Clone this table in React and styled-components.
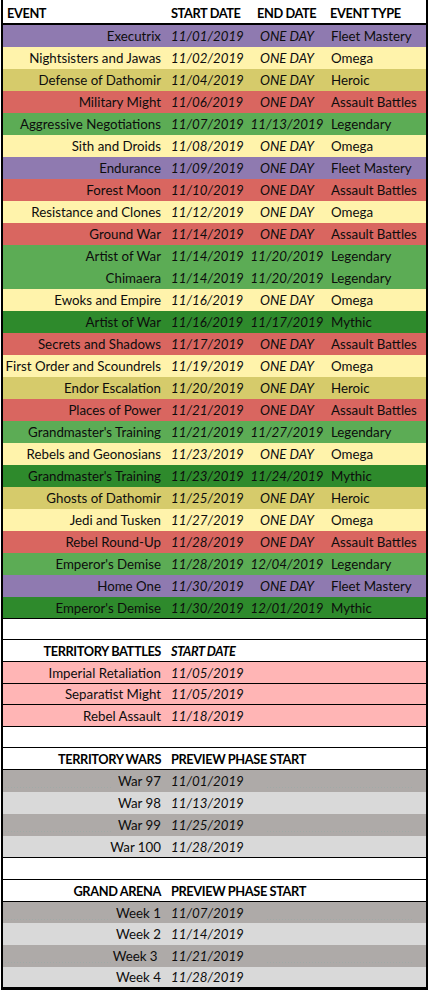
import React from "react";
import styled, { createGlobalStyle, css } from "styled-components";

const GlobalStyle = createGlobalStyle`
  html, body { margin: 0; padding: 0; background: #ffffff; }
  body { font-family: Lato, "Liberation Sans", Arial, sans-serif; color: #0d0d0d; }
`;

const COLORS = {
  fleet: "#8f7ab0",
  omega: "#fff3ab",
  heroic: "#d6cb6b",
  assault: "#d96660",
  legendary: "#5cac55",
  mythic: "#2e8a2c",
  pink: "#ffb5b5",
  grayDark: "#aeaaa8",
  grayLight: "#d9d9d9",
  white: "#ffffff",
};

const TYPE_COLOR = {
  "Fleet Mastery": COLORS.fleet,
  Omega: COLORS.omega,
  Heroic: COLORS.heroic,
  "Assault Battles": COLORS.assault,
  Legendary: COLORS.legendary,
  Mythic: COLORS.mythic,
};

const events = [
  ["Executrix", "11/01/2019", "ONE DAY", "Fleet Mastery"],
  ["Nightsisters and Jawas", "11/02/2019", "ONE DAY", "Omega"],
  ["Defense of Dathomir", "11/04/2019", "ONE DAY", "Heroic"],
  ["Military Might", "11/06/2019", "ONE DAY", "Assault Battles"],
  ["Aggressive Negotiations", "11/07/2019", "11/13/2019", "Legendary"],
  ["Sith and Droids", "11/08/2019", "ONE DAY", "Omega"],
  ["Endurance", "11/09/2019", "ONE DAY", "Fleet Mastery"],
  ["Forest Moon", "11/10/2019", "ONE DAY", "Assault Battles"],
  ["Resistance and Clones", "11/12/2019", "ONE DAY", "Omega"],
  ["Ground War", "11/14/2019", "ONE DAY", "Assault Battles"],
  ["Artist of War", "11/14/2019", "11/20/2019", "Legendary"],
  ["Chimaera", "11/14/2019", "11/20/2019", "Legendary"],
  ["Ewoks and Empire", "11/16/2019", "ONE DAY", "Omega"],
  ["Artist of War", "11/16/2019", "11/17/2019", "Mythic"],
  ["Secrets and Shadows", "11/17/2019", "ONE DAY", "Assault Battles"],
  ["First Order and Scoundrels", "11/19/2019", "ONE DAY", "Omega"],
  ["Endor Escalation", "11/20/2019", "ONE DAY", "Heroic"],
  ["Places of Power", "11/21/2019", "ONE DAY", "Assault Battles"],
  ["Grandmaster's Training", "11/21/2019", "11/27/2019", "Legendary"],
  ["Rebels and Geonosians", "11/23/2019", "ONE DAY", "Omega"],
  ["Grandmaster's Training", "11/23/2019", "11/24/2019", "Mythic"],
  ["Ghosts of Dathomir", "11/25/2019", "ONE DAY", "Heroic"],
  ["Jedi and Tusken", "11/27/2019", "ONE DAY", "Omega"],
  ["Rebel Round-Up", "11/28/2019", "ONE DAY", "Assault Battles"],
  ["Emperor's Demise", "11/28/2019", "12/04/2019", "Legendary"],
  ["Home One", "11/30/2019", "ONE DAY", "Fleet Mastery"],
  ["Emperor's Demise", "11/30/2019", "12/01/2019", "Mythic"],
];

const territoryBattles = [
  ["Imperial Retaliation", "11/05/2019", 22],
  ["Separatist Might", "11/05/2019", 21],
  ["Rebel Assault", "11/18/2019", 22],
];

const territoryWars = [
  ["War 97", "11/01/2019", 22],
  ["War 98", "11/13/2019", 22],
  ["War 99", "11/25/2019", 22],
  ["War 100", "11/28/2019", 22],
];

const grandArena = [
  ["Week 1", "11/07/2019", 21],
  ["Week 2", "11/14/2019", 22],
  ["Week 3\u00a0", "11/21/2019", 22],
  ["Week 4", "11/28/2019", 21],
];

const boldText = css`
  font-weight: 700;
  font-size: 12.8px;
  letter-spacing: -0.4px;
  color: #000;
`;

const Page = styled.div`
  width: 429px;
  padding-left: 1px;
  box-sizing: border-box;
`;

const Sheet = styled.div`
  width: 427px;
  box-sizing: border-box;
  border-left: 2px solid #000;
  border-right: 2px solid #000;
  border-bottom: 2px solid #000;
  display: flex;
  flex-direction: column;
`;

const Row = styled.div`
  display: grid;
  grid-template-columns: 163px 83px 76px 1fr;
  align-items: center;
  box-sizing: border-box;
  height: ${(p) => p.$h || 22}px;
  padding-top: ${(p) => p.$pt ?? 2}px;
  background-color: ${(p) => p.$bg || "#ffffff"};
  border-bottom: ${(p) => (p.$line ? `${p.$line}px solid #000` : "none")};
  font-size: 13.3px;
  line-height: 1;
  white-space: nowrap;
  ${(p) =>
    p.$dots &&
    css`
      background-image: repeating-linear-gradient(90deg, #a1aaa7 0 1px, transparent 1px 3px),
        repeating-linear-gradient(90deg, #a1aaa7 0 1px, transparent 1px 3px);
      background-size: 106px 1px, 146px 1px;
      background-position: 2px 17px, 264px 17px;
      background-repeat: no-repeat;
    `}
`;

const NameCell = styled.div`
  text-align: right;
  padding-right: 5px;
  ${(p) => p.$bold && boldText}
`;

const HeadLeft = styled.div`
  text-align: left;
  padding-left: 4px;
  ${boldText}
`;

const DateCell = styled.div`
  padding-left: 5px;
  font-style: italic;
  ${(p) => p.$bold && boldText}
`;

const HeadCell = styled.div`
  padding-left: ${(p) => p.$pl ?? 5}px;
  grid-column: ${(p) => (p.$span ? `span ${p.$span}` : "auto")};
  ${boldText}
`;

const EndCell = styled.div`
  text-align: center;
  font-style: italic;
`;

const TypeCell = styled.div`
  padding-left: 6px;
`;

function GrayRows({ rows }) {
  return rows.map(([name, date, h], i) => (
    <Row
      key={name}
      $h={h}
      $bg={i % 2 === 0 ? COLORS.grayDark : COLORS.grayLight}
      $dots={i % 2 === 0}
      $line={i === rows.length - 1 ? 1 : 0}
    >
      <NameCell>{name}</NameCell>
      <DateCell>{date}</DateCell>
    </Row>
  ));
}

export default function App() {
  return (
    <Page>
      <GlobalStyle />
      <Sheet>
        <Row $h={25} $pt={3} $line={2}>
          <HeadLeft>EVENT</HeadLeft>
          <HeadCell>START DATE</HeadCell>
          <HeadCell $pl={8}>END DATE</HeadCell>
          <HeadCell>EVENT TYPE</HeadCell>
        </Row>
        {events.map(([name, start, end, type], i) => (
          <Row
            key={i}
            $bg={TYPE_COLOR[type]}
            $line={i === events.length - 1 ? 1 : 0}
          >
            <NameCell>{name}</NameCell>
            <DateCell>{start}</DateCell>
            <EndCell>{end}</EndCell>
            <TypeCell>{type}</TypeCell>
          </Row>
        ))}

        <Row $h={21} $line={1} />
        <Row $h={22} $line={1}>
          <NameCell $bold>TERRITORY BATTLES</NameCell>
          <DateCell $bold>START DATE</DateCell>
        </Row>
        {territoryBattles.map(([name, date, h]) => (
          <Row key={name} $h={h} $bg={COLORS.pink} $line={1}>
            <NameCell>{name}</NameCell>
            <DateCell>{date}</DateCell>
          </Row>
        ))}

        <Row $h={21} $line={1} />
        <Row $h={22} $line={1}>
          <NameCell $bold>TERRITORY WARS</NameCell>
          <HeadCell $span={3}>PREVIEW PHASE START</HeadCell>
        </Row>
        <GrayRows rows={territoryWars} />

        <Row $h={22} $line={1} />
        <Row $h={22} $line={1}>
          <NameCell $bold>GRAND ARENA</NameCell>
          <HeadCell $span={3}>PREVIEW PHASE START</HeadCell>
        </Row>
        <GrayRows rows={grandArena} />
      </Sheet>
    </Page>
  );
}
